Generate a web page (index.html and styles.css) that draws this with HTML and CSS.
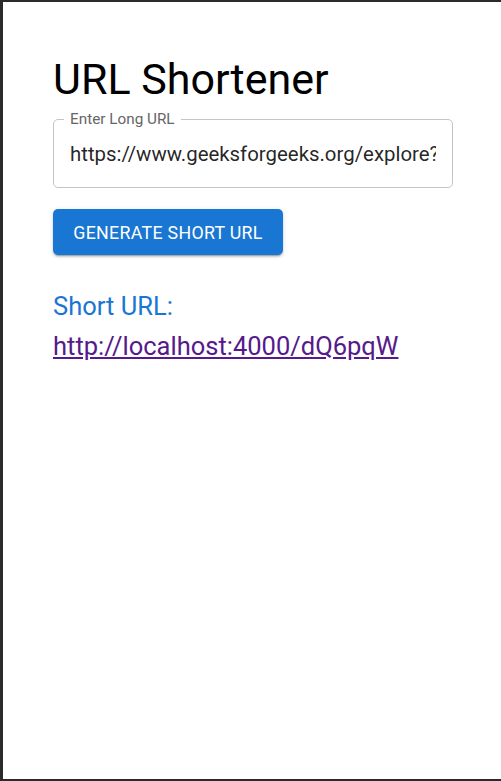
FILE: index.html
```html
<!DOCTYPE html>
<html>
<head>
<meta charset="utf-8">
<link rel="stylesheet" href="styles.css">
</head>
<body>
<div class="frame">
  <main class="container">
    <h1 class="title">URL Shortener</h1>
    <div class="field">
      <fieldset class="outline"><legend class="legend">Enter Long URL</legend></fieldset>
      <div class="input">https://www.geeksforgeeks.org/explore?page=1&amp;sortBy=submissions</div>
    </div>
    <button class="btn">GENERATE SHORT URL</button>
    <div class="result">
      <div class="result-label">Short URL:</div>
      <a class="result-link" href="#">http://localhost:4000/dQ6pqW</a>
    </div>
  </main>
</div>
</body>
</html>
```
FILE: styles.css
```css
html, body {
  margin: 0;
  padding: 0;
  height: 100%;
}
body {
  font-family: Roboto, "Noto Sans", sans-serif;
  background: #ffffff;
}
.frame {
  box-sizing: border-box;
  height: 781px;
  border-top: 2px solid #2b2b2b;
  border-left: 3px solid #2b2b2b;
  border-bottom: 2px solid #2b2b2b;
  background: #fff;
}
.container {
  padding: 50px 0 0 50px;
  width: 400px;
}
.title {
  margin: 0;
  font-weight: 400;
  font-size: 43px;
  line-height: 54px;
  color: #000;
}
.field {
  position: relative;
  margin-top: 13px;
  height: 69px;
  width: 400px;
}
.outline {
  position: absolute;
  inset: -6px 0 0 0;
  margin: 0;
  padding: 0 10px;
  border: 1px solid #c4c4c4;
  border-radius: 5px;
}
.legend {
  padding: 0 6px;
  font-size: 15.3px;
  line-height: 12px;
  color: #666;
}
.input {
  box-sizing: border-box;
  padding: 21px 0 0 17px;
  font-size: 20.4px;
  line-height: 28px;
  color: rgba(0,0,0,0.87);
  white-space: nowrap;
  overflow: hidden;
  width: 383px;
}
.btn {
  display: block;
  margin-top: 21px;
  width: 230px;
  height: 46px;
  border: 0;
  border-radius: 5px;
  background: #1976d2;
  color: #fff;
  font-family: Roboto, sans-serif;
  font-weight: 400;
  font-size: 17.8px;
  letter-spacing: 0.3px;
  box-shadow: 0 3px 1px -2px rgba(0,0,0,0.2), 0 2px 2px 0 rgba(0,0,0,0.14), 0 1px 5px 0 rgba(0,0,0,0.12);
  padding: 0;
}
.result {
  margin-top: 31px;
}
.result-label {
  font-size: 25.5px;
  line-height: 40px;
  color: #1976d2;
}
.result-link {
  display: inline-block;
  font-size: 25.5px;
  line-height: 40px;
  color: #551a8b;
  text-decoration: underline;
}
```
